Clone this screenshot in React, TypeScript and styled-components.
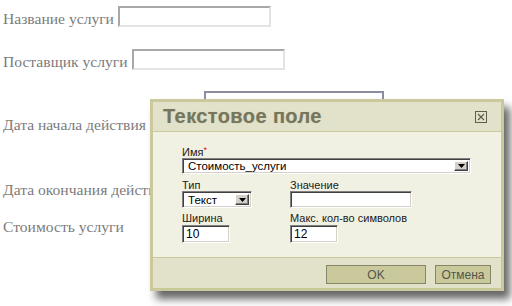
import React from "react";
import styled, { createGlobalStyle } from "styled-components";

const Global = createGlobalStyle`
  html, body { margin: 0; padding: 0; background: #ffffff; }
  body { width: 512px; height: 306px; overflow: hidden; }
`;

const Page = styled.div`
  position: relative;
  width: 512px;
  height: 306px;
  overflow: hidden;
  font-family: "Liberation Serif", "Times New Roman", serif;
  color: #7c7c7c;
`;

const Form = styled.div`
  display: flex;
  flex-direction: column;
  padding-left: 3px;
`;

const Row = styled.div<{ $top: number; $h: number }>`
  display: flex;
  align-items: flex-end;
  gap: 4px;
  margin-top: ${(p) => p.$top}px;
  height: ${(p) => p.$h}px;
`;

const PageLabel = styled.span<{ $w?: number }>`
  font-size: 15.6px;
  line-height: 16px;
  white-space: nowrap;
  ${(p) => (p.$w ? `width: ${p.$w}px; flex: none;` : "")}
`;

const PageInput = styled.input`
  box-sizing: border-box;
  width: ${(p) => p.width}px;
  height: 21px;
  margin: 0;
  padding: 0;
  border-style: solid;
  border-width: 2px;
  border-color: #a8a8a8 #e4e4e4 #e4e4e4 #a8a8a8;
  background: #fff;
  align-self: flex-start;
`;

const DateBox = styled.div`
  box-sizing: border-box;
  width: 180px;
  height: 42px;
  border: 2px solid #8c8ca2;
  background: #fff;
`;

const Dialog = styled.div`
  position: absolute;
  left: 150px;
  top: 99px;
  width: 354px;
  box-sizing: border-box;
  border: 3px solid #c9c99b;
  background: #f1f1e3;
  box-shadow: 6px 8px 8px rgba(0, 0, 0, 0.6);
  display: flex;
  flex-direction: column;
  font-family: "Liberation Sans", Arial, sans-serif;
  font-size: 11px;
  color: #111;
`;

const TitleBar = styled.div`
  height: 29px;
  display: flex;
  align-items: center;
  justify-content: space-between;
  padding: 0 14px 0 10px;
  background: #e2e2ca;
  border-bottom: 1px solid #c9c99b;
`;

const Title = styled.span`
  font-size: 20px;
  font-weight: bold;
  letter-spacing: 0.4px;
  color: #76765d;
  text-shadow: 0 0 1px rgba(120, 120, 90, 0.4);
`;

const CloseBox = styled.svg`
  display: block;
`;

const Body = styled.div`
  height: 125px;
  box-sizing: border-box;
  padding: 14px 0 0 29px;
  display: flex;
  flex-direction: column;
`;

const FieldGrid = styled.div`
  display: grid;
  grid-template-columns: 108px 1fr;
`;

const Field = styled.div<{ $top?: number }>`
  display: flex;
  flex-direction: column;
  align-items: flex-start;
  margin-top: ${(p) => p.$top ?? 0}px;
`;

const FieldLabel = styled.label`
  line-height: 12px;
  height: 12px;
  white-space: nowrap;
  color: #1a1a1a;
`;

const Star = styled.span`
  color: #e01010;
  font-size: 9px;
  vertical-align: top;
  line-height: 8px;
`;

const sunken = `
  box-sizing: border-box;
  border-style: solid;
  border-width: 1px;
  border-color: #808080 #ffffff #ffffff #808080;
  box-shadow: inset 1px 1px 0 #404040, inset -1px -1px 0 #d4d0c8;
  background: #fff;
`;

const Select = styled.div<{ $w: number; $h: number }>`
  ${sunken}
  width: ${(p) => p.$w}px;
  height: ${(p) => p.$h}px;
  display: flex;
  align-items: center;
  padding: 2px 2px 2px 5px;
  font-size: 11.5px;
  color: #000;
`;

const SelectText = styled.span`
  flex: 1;
  white-space: nowrap;
  line-height: 12px;
`;

const DropButton = styled.span`
  box-sizing: border-box;
  width: 14px;
  height: 100%;
  background: #d4d0c8;
  border-style: solid;
  border-width: 1px;
  border-color: #ffffff #404040 #404040 #ffffff;
  box-shadow: inset -1px -1px 0 #808080;
  display: flex;
  align-items: center;
  justify-content: center;
`;

const TextBox = styled.div<{ $w: number; $h: number; $mt?: number }>`
  ${sunken}
  width: ${(p) => p.$w}px;
  height: ${(p) => p.$h}px;
  margin-top: ${(p) => p.$mt ?? 0}px;
  padding: 2px 3px;
  font-size: 12px;
  line-height: 13px;
  color: #000;
`;

const Footer = styled.div`
  height: 31px;
  box-sizing: border-box;
  border-top: 1px solid #c9c99b;
  background: #e2e2ca;
  display: flex;
  justify-content: flex-end;
  align-items: flex-start;
  gap: 9px;
  padding: 7px 10px 0 0;
`;

const Button = styled.button<{ $w: number }>`
  box-sizing: border-box;
  width: ${(p) => p.$w}px;
  height: 19px;
  margin: 0;
  padding: 0;
  border: 1px solid #85856a;
  background: #c9c99c;
  font-family: "Liberation Sans", Arial, sans-serif;
  font-size: 12px;
  color: #55554a;
  line-height: 16px;
`;

const Arrow = () => (
  <svg width="7" height="4" viewBox="0 0 7 4">
    <path d="M0 0h7L3.5 4z" fill="#000" />
  </svg>
);

export default function App() {
  return (
    <>
      <Global />
      <Page>
        <Form>
          <Row $top={6} $h={21}>
            <PageLabel>Название услуги</PageLabel>
            <PageInput width={153} readOnly />
          </Row>
          <Row $top={22} $h={21}>
            <PageLabel>Поставщик услуги</PageLabel>
            <PageInput width={153} readOnly />
          </Row>
          <Row $top={21} $h={42}>
            <PageLabel $w={197}>Дата начала действия</PageLabel>
            <DateBox />
          </Row>
          <Row $top={49} $h={16}>
            <PageLabel>Дата окончания действия</PageLabel>
          </Row>
          <Row $top={21} $h={16}>
            <PageLabel>Стоимость услуги</PageLabel>
          </Row>
        </Form>

        <Dialog>
          <TitleBar>
            <Title>Текстовое поле</Title>
            <CloseBox width="12" height="12" viewBox="0 0 12 12">
              <rect x="0.5" y="0.5" width="11" height="11" fill="none" stroke="#5e5e4c" />
              <path d="M3 3l6 6M9 3l-6 6" stroke="#5e5e4c" strokeWidth="1.2" />
            </CloseBox>
          </TitleBar>
          <Body>
            <Field>
              <FieldLabel>
                Имя<Star>*</Star>
              </FieldLabel>
              <Select $w={289} $h={16}>
                <SelectText>Стоимость_услуги</SelectText>
                <DropButton>
                  <Arrow />
                </DropButton>
              </Select>
            </Field>
            <FieldGrid>
              <Field $top={5}>
                <FieldLabel>Тип</FieldLabel>
                <Select $w={70} $h={17}>
                  <SelectText>Текст</SelectText>
                  <DropButton>
                    <Arrow />
                  </DropButton>
                </Select>
              </Field>
              <Field $top={5}>
                <FieldLabel>Значение</FieldLabel>
                <TextBox $w={122} $h={17} />
              </Field>
              <Field $top={4}>
                <FieldLabel>Ширина</FieldLabel>
                <TextBox $w={48} $h={18} $mt={1}>10</TextBox>
              </Field>
              <Field $top={4}>
                <FieldLabel>Макс. кол-во символов</FieldLabel>
                <TextBox $w={48} $h={18} $mt={1}>12</TextBox>
              </Field>
            </FieldGrid>
          </Body>
          <Footer>
            <Button $w={100}>OK</Button>
            <Button $w={56}>Отмена</Button>
          </Footer>
        </Dialog>
      </Page>
    </>
  );
}
